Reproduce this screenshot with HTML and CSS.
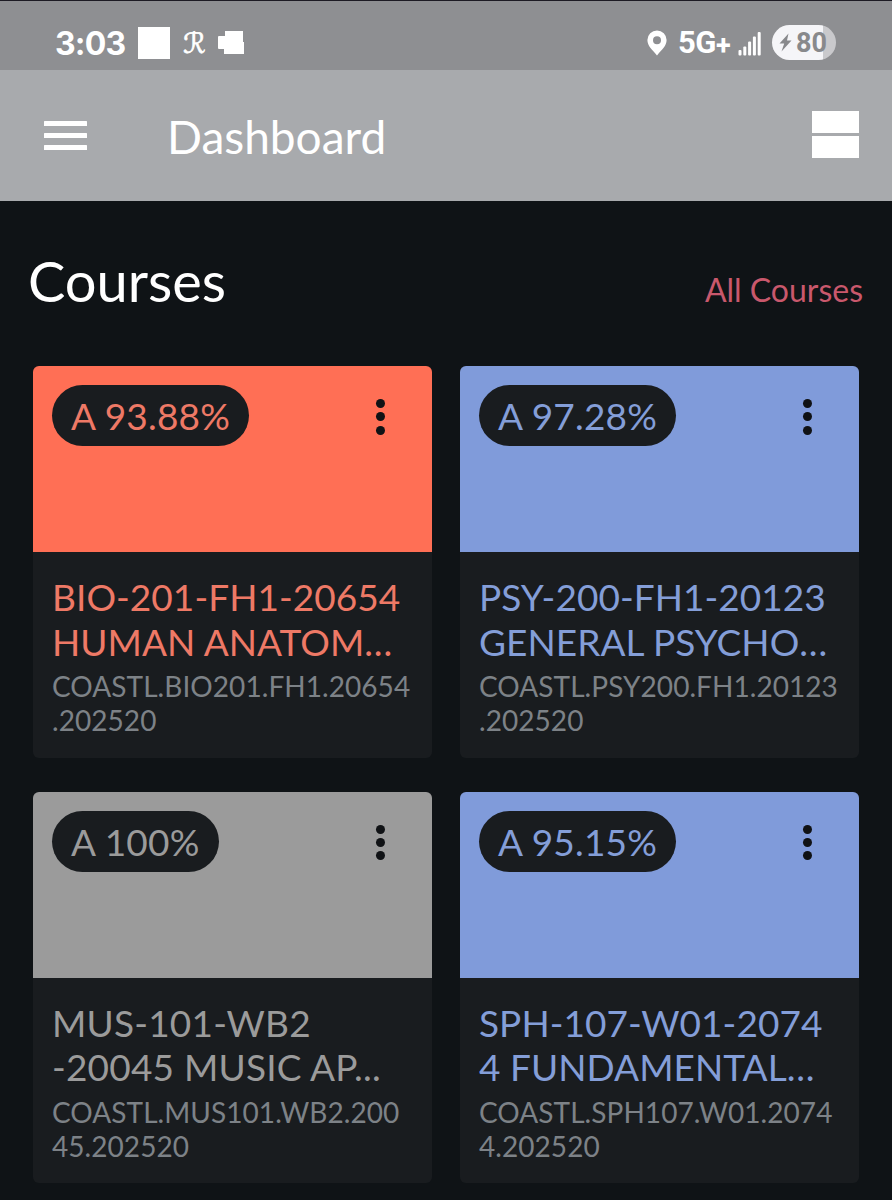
FILE: index.html
```
<!DOCTYPE html>
<html lang="en">
  <head>
    <meta charset="UTF-8" />
    <meta name="viewport" content="width=device-width, initial-scale=1.0" />
    <title>Dashboard</title>
    <link rel="stylesheet" href="styles.css">
  </head>
  <body>
    <div class="status-bar">
      <div class="status-left">
        <span class="time">3:03</span>
        <span class="square"></span>
        <span class="script-r">ℛ</span>
        <svg class="blob" width="28" height="26" viewBox="0 0 28 26" fill="#fff">
          <path d="M8 1h18v11h1v12H7v-5H2q-1 0-1-1V7q0-1 1-1h6z" />
        </svg>
      </div>
      <div class="status-right">
        <svg class="pin" width="20" height="26" viewBox="0 0 20 26">
          <path fill="#fff" fill-rule="evenodd" d="M10 0.5a9.6 9.6 0 0 0-9.6 9.6C.4 16 5 19.5 10 25.5c5-6 9.6-9.5 9.6-15.4A9.6 9.6 0 0 0 10 .5zm0 5.700a4 4 0 1 1 0 8 4 4 0 0 1 0-8z" />
        </svg>
        <span class="network">5G<span class="plus">+</span></span>
        <svg class="signal" width="24" height="25" viewBox="0 0 24 25" fill="#fff">
          <rect x="0.5" y="19" width="3" height="5.5" rx="1" />
          <rect x="5.3" y="15.5" width="3" height="9" rx="1" />
          <rect x="10.1" y="10.5" width="3" height="14" rx="1" />
          <rect x="14.9" y="5.5" width="3" height="19" rx="1" />
          <rect x="19.7" y="1" width="3" height="23.5" rx="1" />
        </svg>
        <div class="battery">
          <svg width="13" height="19" viewBox="0 0 13 19">
            <path fill="#88898c" d="M9.5 0.5L0.5 10.5h4.700L2.500 18.500l10-11H8z" />
          </svg>
          <span>80</span>
        </div>
      </div>
    </div>

    <header>
      <svg class="menu" width="43" height="30" viewBox="0 0 43 30" fill="#fff">
        <rect width="43" height="5" rx="0.5" />
        <rect y="12" width="43" height="5" rx="0.5" />
        <rect y="24" width="43" height="5" rx="0.5" />
      </svg>
      <h1>Dashboard</h1>
      <div class="layout-toggle">
        <span></span>
        <span></span>
      </div>
    </header>

    <main>
      <div class="section-title">
        <h2>Courses</h2>
        <a class="all-courses">All Courses</a>
      </div>

      <div class="courses">
        <div class="card orange">
          <div class="card-top">
            <span class="grade">A 93.88%</span>
            <span class="dots"><i></i><i></i><i></i></span>
          </div>
          <div class="card-body">
            <h3>BIO-201-FH1-20654<br />HUMAN ANATOM<span class="more">...</span></h3>
            <p>COASTL.BIO201.FH1.20654<br />.202520</p>
          </div>
        </div>

        <div class="card blue">
          <div class="card-top">
            <span class="grade">A 97.28%</span>
            <span class="dots"><i></i><i></i><i></i></span>
          </div>
          <div class="card-body">
            <h3>PSY-200-FH1-20123<br />GENERAL PSYCHO<span class="more">...</span></h3>
            <p>COASTL.PSY200.FH1.20123<br />.202520</p>
          </div>
        </div>

        <div class="card gray">
          <div class="card-top">
            <span class="grade">A 100%</span>
            <span class="dots"><i></i><i></i><i></i></span>
          </div>
          <div class="card-body">
            <h3>MUS-101-WB2<br />-20045 MUSIC AP...</h3>
            <p>COASTL.MUS101.WB2.200<br />45.202520</p>
          </div>
        </div>

        <div class="card blue">
          <div class="card-top">
            <span class="grade">A 95.15%</span>
            <span class="dots"><i></i><i></i><i></i></span>
          </div>
          <div class="card-body">
            <h3>SPH-107-W01-2074<br />4 FUNDAMENTAL<span class="more">...</span></h3>
            <p>COASTL.SPH107.W01.2074<br />4.202520</p>
          </div>
        </div>
      </div>
    </main>
  </body>
</html>
```
FILE: styles.css
```
* {
  box-sizing: border-box;
}

body {
  font-family: Lato, sans-serif;
  background-color: #0f1316;
  margin: 0;
  color: #fff;
}

h1,
h2,
h3,
p {
  margin: 0;
  font-weight: 400;
  white-space: nowrap;
}

.status-bar {
  display: flex;
  justify-content: space-between;
  height: 70px;
  padding: 15px 56px 0 55px;
  background-color: #8e8f92;
  border-top: 1px solid #1d1b24;
}

.status-left,
.status-right {
  display: flex;
  align-items: center;
  height: 54px;
}

.time {
  width: 83px;
  font-family: Inter, sans-serif;
  font-size: 32px;
  font-weight: 700;
  letter-spacing: -0.8px;
}

.square {
  width: 32px;
  height: 32px;
  background-color: #fff;
}

.script-r {
  width: 20px;
  margin: 0 14px 0 13px;
  font-family: "DejaVu Sans", sans-serif;
  font-size: 28px;
  -webkit-text-stroke: 0.7px #fff;
}

.network {
  width: 60px;
  margin-left: 11px;
  font-family: Roboto, sans-serif;
  font-size: 31px;
  font-weight: 700;
  letter-spacing: -0.5px;
  line-height: 36px;
}

.plus {
  font-size: 27px;
  line-height: 1;
  vertical-align: -2px;
}

.battery {
  display: flex;
  align-items: center;
  gap: 4px;
  width: 64px;
  height: 35px;
  margin: 0 0 1px 10px;
  padding-left: 7px;
  border-radius: 18px;
  background: linear-gradient(to right, #f5f5f8 51px, #c9c9cc 51px);
  color: #88898c;
  font-family: Roboto, sans-serif;
  font-size: 27px;
  font-weight: 700;
}

header {
  display: flex;
  align-items: center;
  height: 131px;
  padding: 0 33px 0 44px;
  background-color: #a8aaad;
}

h1 {
  margin-left: 80px;
  padding-top: 2px;
  font-size: 46px;
}

.layout-toggle {
  display: flex;
  flex-direction: column;
  gap: 3px;
  width: 47px;
  margin: 0 0 2px auto;
}

.layout-toggle span {
  height: 22px;
  background-color: #fff;
}

main {
  padding: 0 33px;
}

.section-title {
  display: flex;
  justify-content: space-between;
  align-items: baseline;
  height: 165px;
  margin: 0 -4px 0 -5px;
  padding-top: 46px;
}

h2 {
  font-size: 56px;
}

.all-courses {
  color: #c9586c;
  font-size: 32px;
}

.courses {
  display: grid;
  grid-template-columns: 1fr 1fr;
  gap: 34px 28px;
}

.card {
  height: 391.5px;
  border-radius: 6px;
  background-color: #191c1f;
  overflow: hidden;
}

.card-top {
  display: flex;
  justify-content: space-between;
  align-items: flex-start;
  height: 186px;
  padding: 19px 47px 0 19px;
}

.grade {
  height: 61px;
  padding: 0 19px;
  border-radius: 31px;
  background-color: #191c1f;
  font-size: 37px;
  line-height: 62px;
  letter-spacing: 0.2px;
}

.dots {
  display: flex;
  flex-direction: column;
  gap: 4.3px;
  padding-top: 14px;
}

.dots i {
  width: 9px;
  height: 9px;
  border-radius: 50%;
  background-color: #101215;
}

.card-body {
  padding: 23px 19px;
}

h3 {
  font-size: 37px;
  line-height: 44.5px;
  letter-spacing: 0.05px;
}

.more {
  letter-spacing: 0.8px;
}

p {
  margin-top: 5px;
  color: #7d8287;
  font-size: 28px;
  line-height: 34px;
  letter-spacing: 0.06px;
}

.orange .card-top {
  background-color: #ff6f55;
}

.orange .grade,
.orange h3 {
  color: #ee7966;
}

.blue .card-top {
  background-color: #809bda;
}

.blue .grade,
.blue h3 {
  color: #849ed8;
}

.gray .card-top {
  background-color: #9b9b9b;
}

.gray .grade,
.gray h3 {
  color: #9b9b9b;
}

.gray h3 {
  letter-spacing: 0.2px;
}
```
